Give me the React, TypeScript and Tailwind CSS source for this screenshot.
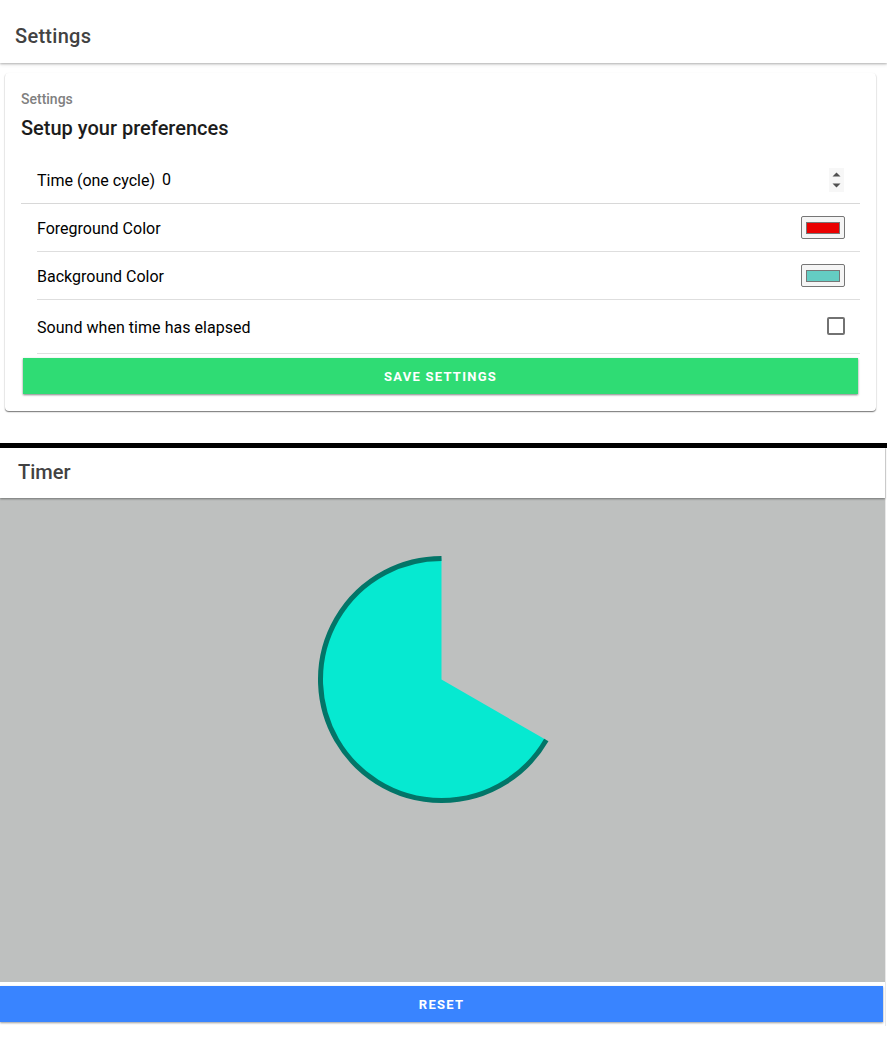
import React from "react";

function Header({ title, className }: { title: string; className: string }) {
  return (
    <header className={`relative z-10 flex shrink-0 items-center bg-white text-xl font-medium text-[#424242] ${className}`}>
      <h1>{title}</h1>
    </header>
  );
}

function ColorSwatch({ color }: { color: string }) {
  return (
    <button className="flex h-[23px] w-[44px] items-center justify-center rounded-[2px] border border-[#767676] bg-[#f5f5f5]">
      <span className={`h-[12px] w-[34px] border border-[#777777] ${color}`} />
    </button>
  );
}

function SettingsPage() {
  return (
    <section className="flex h-[443px] flex-col bg-white">
      <Header
        title="Settings"
        className="h-[63px] pl-[15px] pt-[9px] tracking-[0.28px] shadow-[0_1px_2px_rgba(0,0,0,0.25),0_2px_4px_rgba(0,0,0,0.08)]"
      />
      <div className="ml-[5px] mr-[11px] mt-[10px] flex h-[338px] flex-col rounded-[4px] bg-white px-4 shadow-[0_1px_1px_rgba(0,0,0,0.42),0_1px_2px_rgba(0,0,0,0.2)]">
        <div className="mt-[16px] text-sm leading-5 font-medium text-[#808080]">Settings</div>
        <h2 className="mt-[5px] text-xl leading-7 font-medium text-[#1c1c1c]">Setup your preferences</h2>
        <div className="mt-[14px] flex h-[48px] items-center border-b border-[#d8d8d8] px-4">
          <label className="pt-[2px]">Time (one cycle)</label>
          <span className="ml-[7px] flex-1">0</span>
          <span className="flex h-6 w-[15px] items-center justify-center bg-[#f7f7f7]">
            <svg width="9" height="16" viewBox="0 0 9 16" fill="#505050">
              <path d="M0.5 4.5 4.5 0.5 8.5 4.5ZM0.5 11.5 4.5 15.5 8.5 11.5Z" />
            </svg>
          </span>
        </div>
        <div className="ml-4 flex h-[48px] items-center justify-between border-b border-[#dedede] pr-[15.5px]">
          <label className="pt-[2px]">Foreground Color</label>
          <ColorSwatch color="bg-[#ea0000]" />
        </div>
        <div className="ml-4 flex h-[48px] items-center justify-between border-b border-[#dedede] pr-[15.5px]">
          <label className="pt-[2px]">Background Color</label>
          <ColorSwatch color="bg-[#64cdc3]" />
        </div>
        <div className="ml-4 flex h-[54px] items-center justify-between border-b border-[#e0e0e0] pr-[15.5px]">
          <label className="pt-[2px] tracking-[0.04px]">Sound when time has elapsed</label>
          <span className="mb-px size-[18px] rounded-[2px] border-2 border-[#727272]" />
        </div>
        <button className="mx-[2px] mt-1 h-[36px] bg-[#2fdc74] pt-px text-[13px] font-bold tracking-[1.25px] text-white shadow-[0_1px_2px_rgba(0,0,0,0.5)]">
          SAVE SETTINGS
        </button>
      </div>
    </section>
  );
}

function TimerPage() {
  return (
    <section className="flex h-[578px] w-[886px] flex-col border-r border-[#e8e8e8] bg-white">
      <Header title="Timer" className="h-[50px] pb-[2px] pl-[18px] shadow-[0_1px_2px_rgba(0,0,0,0.4)]" />
      <div className="flex h-[484px] justify-center bg-[#bec0bf] pt-[57px]">
        <svg className="mr-[3px]" width="248" height="249" viewBox="-124.5 -124.5 248 249">
          <path d="M0 0V-121A121 121 0 1 0 104.79 60.5Z" fill="#06e9d1" />
          <path d="M0-121A121 121 0 1 0 104.79 60.5" fill="none" stroke="#037568" strokeWidth="5" />
        </svg>
      </div>
      <button className="mr-[2px] mt-1 h-[36px] bg-[#3984ff] pt-px text-[13px] font-bold tracking-[1.25px] text-white shadow-[0_1px_2px_rgba(0,0,0,0.4)]">
        RESET
      </button>
    </section>
  );
}

export default function App() {
  return (
    <main className="h-[1046px] w-[887px] overflow-hidden bg-white font-['Roboto',sans-serif] text-base text-black">
      <SettingsPage />
      <div className="h-[5px] bg-black" />
      <TimerPage />
    </main>
  );
}
